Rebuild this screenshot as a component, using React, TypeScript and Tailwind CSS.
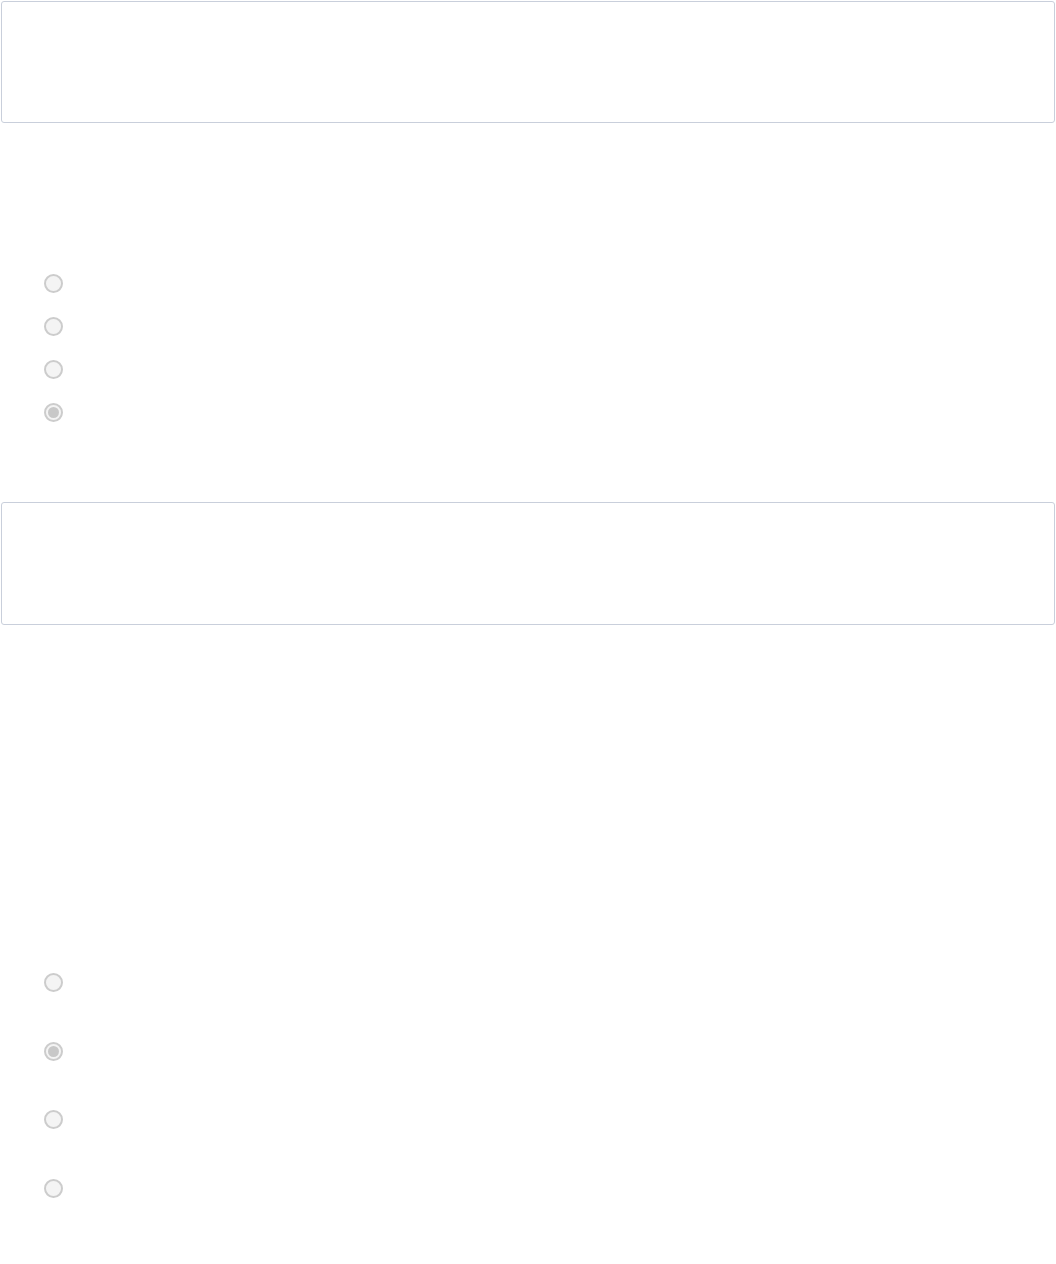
import React from 'react';

function Radio({ checked = false }: { checked?: boolean }) {
  return (
    <span className="flex h-[19px] w-[19px] items-center justify-center rounded-full border-2 border-[#cccccc] bg-[#f4f4f4]">
      {checked && <span className="h-[11px] w-[11px] rounded-full bg-[#c8c8c8]" />}
    </span>
  );
}

export default function App() {
  return (
    <div className="min-h-[1264px] bg-white font-['Liberation_Sans',sans-serif]">
      {/* first panel */}
      <div className="mx-px mt-px h-[122px] rounded-[3px] border border-[#c9cfdb]" />

      {/* first radio group */}
      <div className="mt-[151px] flex flex-col gap-[24px] pl-[44px]">
        <Radio />
        <Radio />
        <Radio />
        <Radio checked />
      </div>

      {/* second panel */}
      <div className="mx-px mt-[80px] h-[123px] rounded-[3px] border border-[#c9cfdb]" />

      {/* second radio group */}
      <div className="mt-[348px] flex flex-col gap-[49.5px] pl-[44px]">
        <Radio />
        <Radio checked />
        <Radio />
        <Radio />
      </div>
    </div>
  );
}
